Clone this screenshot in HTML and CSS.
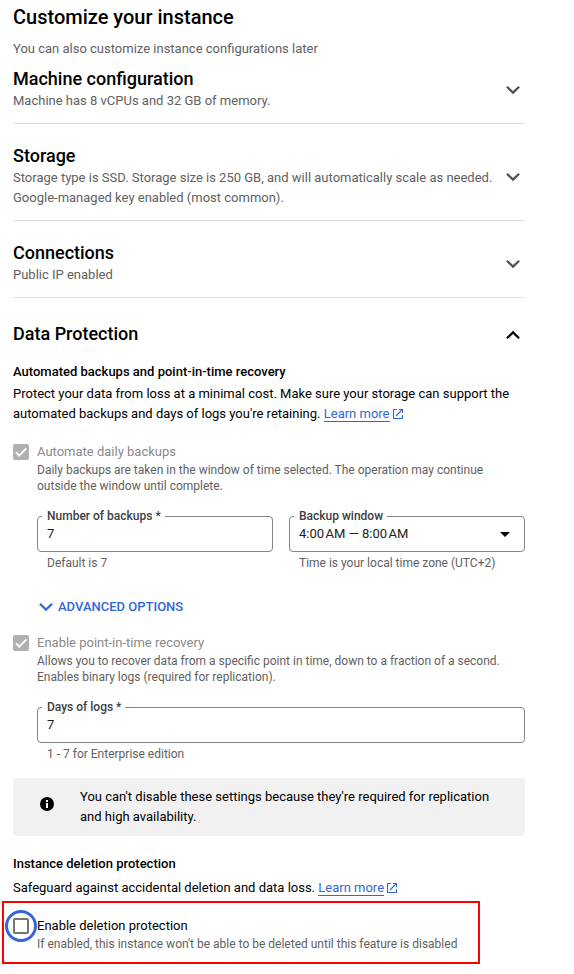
FILE: index.html
```html
<!DOCTYPE html>
<html lang="en">
<head>
<meta charset="utf-8">
<title>Customize your instance</title>
<link rel="stylesheet" href="styles.css">
</head>
<body>
<svg class="defs" width="0" height="0">
  <symbol id="check" viewBox="0 0 16 16"><path d="M3 8.2 6.2 11.6 13.4 4.3" fill="none" stroke="#fff" stroke-width="1.9"/></symbol>
  <symbol id="chevron" viewBox="0 0 16 16"><path d="M1.9 4.7 8 10.6 14.1 4.7" fill="none" stroke="currentColor" stroke-width="2.2"/></symbol>
  <symbol id="external" viewBox="0 0 10 10"><path d="M4 .5H.5V9.5H9.5V6M6 .5H9.5V4M9.5 .5 3 7" fill="none" stroke="currentColor" stroke-width="1.15"/></symbol>
</svg>
<main class="page">
  <h1 class="title">Customize your instance</h1>
  <p class="subtitle">You can also customize instance configurations later</p>

  <section class="panel panel-first">
    <div><h2>Machine configuration</h2><p>Machine has 8 vCPUs and 32 GB of memory.</p></div>
    <svg class="chevron"><use href="#chevron"/></svg>
  </section>
  <section class="panel">
    <div><h2>Storage</h2><p class="storage">Storage type is SSD. Storage size is 250 GB, and will automatically scale as needed.<br>Google-managed key enabled (most common).</p></div>
    <svg class="chevron"><use href="#chevron"/></svg>
  </section>
  <section class="panel">
    <div><h2>Connections</h2><p>Public IP enabled</p></div>
    <svg class="chevron"><use href="#chevron"/></svg>
  </section>

  <section class="protection">
    <header class="open-head"><h2>Data Protection</h2><svg class="chevron chevron-up"><use href="#chevron"/></svg></header>
    <h3 class="backup-head">Automated backups and point-in-time recovery</h3>
    <p class="copy">Protect your data from loss at a minimal cost. Make sure your storage can support the<br>automated backups and days of logs you're retaining. <a class="link">Learn more</a><svg class="external"><use href="#external"/></svg></p>

    <div class="option daily">
      <span class="box checked"><svg><use href="#check"/></svg></span>
      <div><div class="label muted">Automate daily backups</div>
      <p class="desc">Daily backups are taken in the window of time selected. The operation may continue<br>outside the window until complete.</p></div>
    </div>
    <div class="fields">
      <div class="field"><div class="input"><span class="float">Number of backups *</span>7</div><p class="hint">Default is 7</p></div>
      <div class="field"><div class="input"><span class="float">Backup window</span><span><span class="time">4:00 AM</span> — <span class="time">8:00 AM</span></span><span class="arrow"></span></div><p class="hint">Time is your local time zone (UTC+2)</p></div>
    </div>
    <div class="advanced"><svg class="chevron"><use href="#chevron"/></svg>ADVANCED OPTIONS</div>

    <div class="option">
      <span class="box checked"><svg><use href="#check"/></svg></span>
      <div><div class="label muted">Enable point-in-time recovery</div>
      <p class="desc">Allows you to recover data from a specific point in time, down to a fraction of a second.<br>Enables binary logs (required for replication).</p></div>
    </div>
    <div class="fields">
      <div class="field"><div class="input"><span class="float">Days of logs *</span>7</div><p class="hint">1 - 7 for Enterprise edition</p></div>
    </div>
    <aside class="notice">
      <svg class="info" viewBox="0 0 14 14"><circle cx="7" cy="7" r="7"/><path d="M6 3h2v2H6zM6 6h2v5H6z" fill="#fff"/></svg>
      <p>You can't disable these settings because they're required for replication<br>and high availability.</p>
    </aside>
    <h3 class="deletion-head">Instance deletion protection</h3>
    <p class="copy">Safeguard against accidental deletion and data loss. <a class="link">Learn more</a><svg class="external"><use href="#external"/></svg></p>
  </section>
  <div class="highlight">
    <div class="option">
      <span class="box empty"></span>
      <div><div class="label">Enable deletion protection</div><p class="desc">If enabled, this instance won't be able to be deleted until this feature is disabled</p></div>
    </div>
  </div>
</main>
</body>
</html>
```
FILE: styles.css
```css
* { box-sizing: border-box; }
body { margin: 0; background: #fff; color: #000; font: 13px/20px Roboto, "Liberation Sans", sans-serif; white-space: nowrap; }
h1, h2, h3, p { margin: 0; }
.defs { position: absolute; }
.page { width: 574px; height: 974px; padding: 5px 49px 0 13px; overflow: hidden; }
.title { font-size: 20px; line-height: 24px; font-weight: 500; }
.subtitle { margin-top: 10px; color: #616161; }
h2 { font-size: 18px; line-height: 24px; font-weight: 500; }
h3 { font-size: 13px; line-height: 20px; font-weight: 500; }
.panel { display: flex; justify-content: space-between; align-items: center; padding: 20px 4px 12px 0; border-bottom: 1px solid #e0e0e0; }
.panel-first { padding-top: 8px; }
.panel p { color: #616161; }
.chevron { display: block; width: 16px; height: 16px; flex: none; color: #505050; margin-top: 2px; }
.chevron-up { transform: rotate(180deg); color: #000; }
.open-head { display: flex; justify-content: space-between; align-items: center; padding-right: 4px; height: 24px; margin-top: 24px; }
.backup-head { margin-top: 16px; }
.copy { margin-top: 2px; }
.link { color: #3367d6; border-bottom: 1px solid #3367d6; }
.external { width: 10px; height: 10px; color: #3367d6; margin-left: 3px; vertical-align: -1px; }
.option { display: flex; }
.daily { margin-top: 18px; }
.box { width: 16px; height: 16px; flex: none; margin: 2px 8px 0 0; border-radius: 2px; }
.box svg { display: block; width: 16px; height: 16px; }
.checked { background: #b0b0b0; }
.muted { color: #8a8a8a; }
.desc, .hint { font-size: 12px; line-height: 16px; color: #616161; }
.fields { display: flex; gap: 16px; margin: 22px 0 0 24px; }
.field { flex: 1; }
.input { position: relative; display: flex; justify-content: space-between; align-items: center; height: 36px; padding: 0 14px 0 9px; border: 1px solid #80868b; border-radius: 4px; color: #202124; }
.float { position: absolute; left: 4px; top: -9px; padding: 0 4px 0 5px; background: #fff; font-size: 12px; line-height: 16px; font-weight: 500; color: #3c4043; }
.time { word-spacing: -1.7px; }
.arrow { border: 5px solid transparent; border-top-color: #000; border-bottom: 0; }
.hint { margin: 3px 0 0 10px; }
.advanced { display: flex; align-items: center; gap: 4px; height: 20px; margin: 26px 0 16px 25px; color: #3367d6; font-weight: 500; }
.advanced .chevron { color: #3367d6; margin-top: 0; }
.notice { display: flex; align-items: center; height: 58px; margin-top: 16px; padding-left: 27px; gap: 26px; background: #f1f1f1; border-radius: 4px; }
.info { width: 14px; height: 14px; margin-top: -6px; }
.deletion-head { margin-top: 18px; }
.deletion-head + .copy { margin-top: 4px; }
.highlight { width: 478px; height: 63px; margin: 3px 0 0 -11px; padding: 13px 0 0 9px; border: 2px solid #f00; }
.empty { position: relative; border: 2px solid #757575; }
.empty::before { content: ""; position: absolute; inset: -10px; border: 3px solid #3367d6; border-radius: 50%; }
```
